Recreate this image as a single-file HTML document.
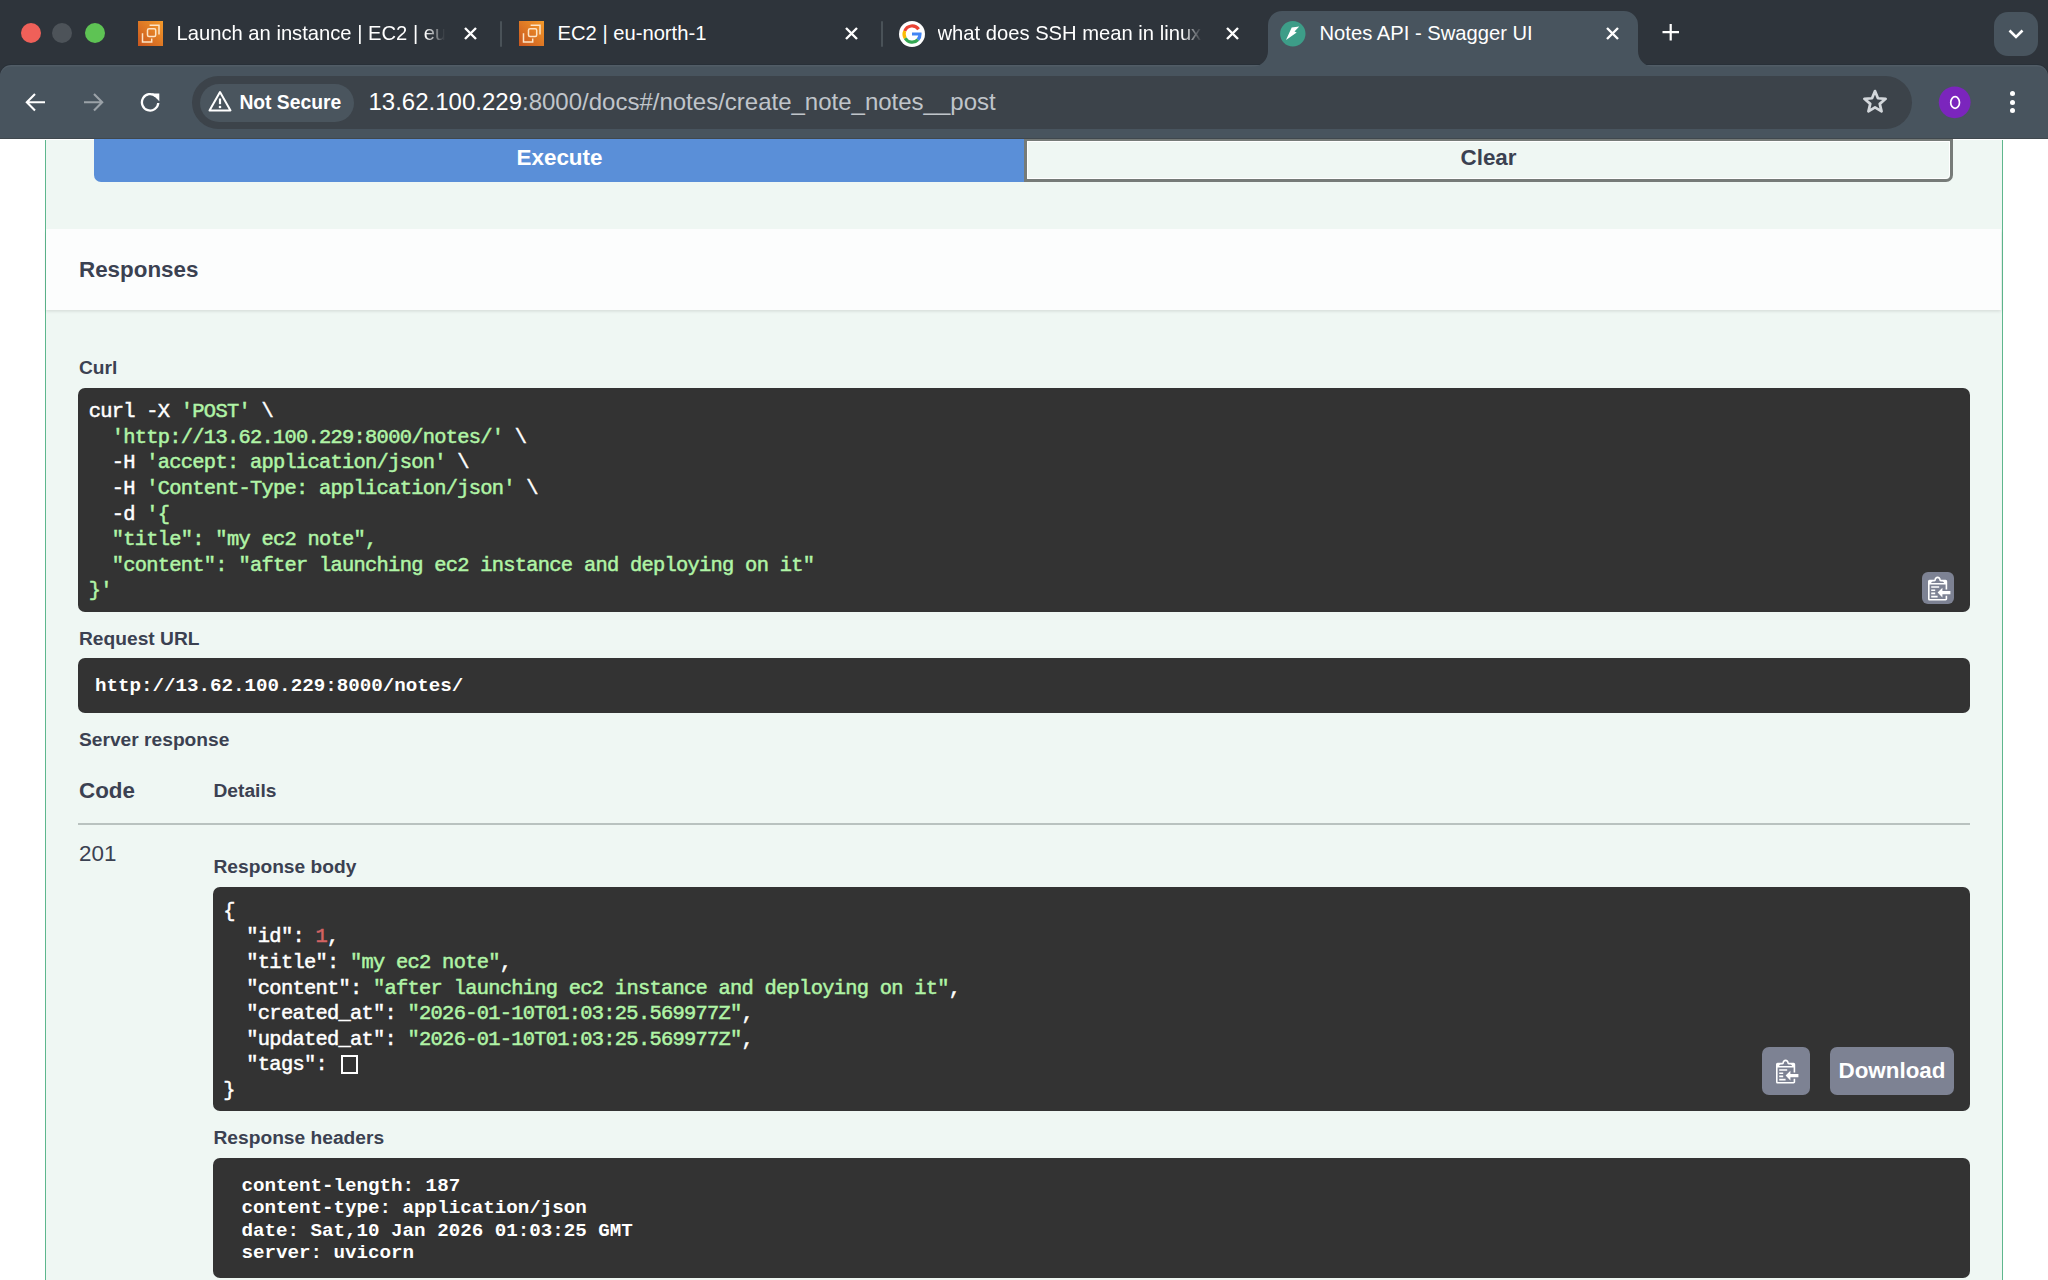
<!DOCTYPE html>
<html><head><meta charset="utf-8">
<style>
*{margin:0;padding:0;box-sizing:border-box}
html,body{width:2048px;height:1280px;overflow:hidden;background:#fff;font-family:"Liberation Sans",sans-serif}
.a{position:absolute}
#tabs{left:0;top:0;width:2048px;height:90px;background:#2e343b}
.tl{width:20px;height:20px;border-radius:50%;top:22px}
.ttl{color:#fff;font-size:20.2px;top:21px;white-space:nowrap;overflow:hidden;line-height:24px}
.x{width:14px;height:14px;top:26px}
.sep{width:2px;height:26px;top:21px;background:#4a5258;border-radius:1px}
#toolbar{left:0;top:65px;width:2048px;height:74px;background:#48545e;border-radius:11px 11px 0 0;box-shadow:0 -1px 0 #283038,inset 0 1.5px 0 rgba(255,255,255,.05)}
#omni{left:192px;top:76px;width:1720.4px;height:53.4px;background:#3c434a;border-radius:27px}
#chip{left:200px;top:84px;width:154px;height:38px;background:#4a555e;border-radius:19px}
#page{left:0;top:140px;width:2048px;height:1140px;background:#fff;overflow:hidden}
#opblock{left:44.7px;top:-20px;width:1958.4px;height:1200px;background:#eff7f3;border-left:1.7px solid #5eb78d;border-right:1.7px solid #5eb78d}
.h{color:#3b4151;font-weight:bold;white-space:nowrap}
.code{background:#333;border-radius:7px}
.mono{font-family:"Liberation Mono",monospace;white-space:pre;color:#fff;-webkit-text-stroke:0.5px currentColor}
.g{color:#b0f4a6}
</style></head><body>
<!-- PAGE -->
<div id="page" class="a">
  <div id="opblock" class="a"></div>
</div>
<!-- buttons -->
<div class="a" style="left:94px;top:130px;width:931px;height:52px;background:#5a8fd8;border-radius:0 0 0 7px"></div>
<div class="a h" style="left:94px;top:146.8px;width:931px;text-align:center;font-size:22.4px;line-height:22.4px;color:#fff">Execute</div>
<div class="a" style="left:1024px;top:138px;width:929px;height:43.8px;border:3px solid #767b78;border-radius:0 0 7px 0;background:#eff7f3"></div>
<div class="a" style="left:1027px;top:141px;width:923px;height:37.8px;border:1.3px solid #fff;border-radius:0 0 5px 0"></div>
<div class="a h" style="left:1024px;top:146.8px;width:929px;text-align:center;font-size:22.4px;line-height:22.4px">Clear</div>
<!-- responses header -->
<div class="a" style="left:46.4px;top:229px;width:1954.4px;height:81px;background:#fcfdfd;box-shadow:0 1.6px 3px rgba(0,0,0,.1),0 -0.5px 1px rgba(0,0,0,.04)"></div>
<div class="a h" style="left:79px;top:258.7px;font-size:22.4px;line-height:22.4px">Responses</div>
<div class="a h" style="left:79px;top:358.4px;font-size:19.2px;line-height:19.2px">Curl</div>
<div class="a code" style="left:78.4px;top:388.4px;width:1891.4px;height:223.4px"></div>
<div class="a mono" style="left:88.7px;top:399.3px;font-size:20.4px;letter-spacing:-0.72px;line-height:25.6px">curl -X <span class="g">'POST'</span> \
  <span class="g">'http://13.62.100.229:8000/notes/'</span> \
  -H <span class="g">'accept: application/json'</span> \
  -H <span class="g">'Content-Type: application/json'</span> \
  -d <span class="g">'{
  "title": "my ec2 note",
  "content": "after launching ec2 instance and deploying on it"
}'</span></div>
<div class="a" style="left:1922px;top:572px;width:32px;height:32px;border-radius:6px;background:#7d8293"></div>
<svg class="a" style="left:1928px;top:574.6px" width="24" height="27" viewBox="0 0 15 16.875"><path fill="#fff" d="M2 13h4v1H2v-1zm5-6H2v1h5V7zm2 3V8l-3 3 3 3v-2h5v-2H9zM4.5 9H2v1h2.5V9zM2 12h2.5v-1H2v1zm9 1h1v2c-.02.28-.11.52-.3.7-.19.18-.42.28-.7.3H1c-.55 0-1-.45-1-1V4c0-.55.45-1 1-1h3c0-1.110.89-2 2-2 1.11 0 2 .89 2 2h3c.55 0 1 .45 1 1v5h-1V6H1v9h10v-2zM2 5h8c0-.55-.45-1-1-1H8c-.55 0-1-.45-1-1s-.45-1-1-1-1 .45-1 1-.45 1-1 1H3c-.55 0-1 .45-1 1z"/></svg>
<div class="a h" style="left:79px;top:629.2px;font-size:19.2px;line-height:19.2px">Request URL</div>
<div class="a code" style="left:78.2px;top:658px;width:1891.6px;height:54.6px"></div>
<div class="a mono" style="left:94.9px;top:673.6px;font-size:19.2px;line-height:25.6px;font-weight:bold;-webkit-text-stroke:0">http://13.62.100.229:8000/notes/</div>
<div class="a h" style="left:79px;top:729.7px;font-size:19.2px;line-height:19.2px">Server response</div>
<div class="a h" style="left:79px;top:779.7px;font-size:22.4px;line-height:22.4px">Code</div>
<div class="a h" style="left:213.5px;top:781.2px;font-size:19.2px;line-height:19.2px">Details</div>
<div class="a" style="left:78px;top:823px;width:1892px;height:2px;background:#b9c2bf"></div>
<div class="a h" style="left:79px;top:843.2px;font-size:22.4px;line-height:22.4px;font-weight:normal">201</div>
<div class="a h" style="left:213.5px;top:857.4px;font-size:19.2px;line-height:19.2px">Response body</div>
<div class="a code" style="left:213px;top:887.3px;width:1756.8px;height:223.4px"></div>
<div class="a mono" style="left:223.3px;top:898.9px;font-size:20.4px;letter-spacing:-0.72px;line-height:25.6px">{
  "id": <span style="color:#d36363">1</span>,
  "title": <span class="g">"my ec2 note"</span>,
  "content": <span class="g">"after launching ec2 instance and deploying on it"</span>,
  "created_at": <span class="g">"2026-01-10T01:03:25.569977Z"</span>,
  "updated_at": <span class="g">"2026-01-10T01:03:25.569977Z"</span>,
  "tags": <span style="display:inline-block;vertical-align:top;margin-top:2.6px;margin-left:2.2px;width:17.4px;height:19.4px;border:2.7px solid #fff"></span>
}</div>
<div class="a" style="left:1762px;top:1047px;width:48px;height:48px;border-radius:7px;background:#7d8293"></div>
<svg class="a" style="left:1775.7px;top:1057.7px" width="24" height="27" viewBox="0 0 15 16.875"><path fill="#fff" d="M2 13h4v1H2v-1zm5-6H2v1h5V7zm2 3V8l-3 3 3 3v-2h5v-2H9zM4.5 9H2v1h2.5V9zM2 12h2.5v-1H2v1zm9 1h1v2c-.02.28-.11.52-.3.7-.19.18-.42.28-.7.3H1c-.55 0-1-.45-1-1V4c0-.55.45-1 1-1h3c0-1.110.89-2 2-2 1.11 0 2 .89 2 2h3c.55 0 1 .45 1 1v5h-1V6H1v9h10v-2zM2 5h8c0-.55-.45-1-1-1H8c-.55 0-1-.45-1-1s-.45-1-1-1-1 .45-1 1-.45 1-1 1H3c-.55 0-1 .45-1 1z"/></svg>
<div class="a" style="left:1830px;top:1047px;width:124px;height:48px;border-radius:7px;background:#7d8293"></div>
<div class="a h" style="left:1830px;top:1060.2px;width:124px;text-align:center;font-size:22.4px;line-height:22.4px;color:#fff">Download</div>
<div class="a h" style="left:213.5px;top:1128.2px;font-size:19.2px;line-height:19.2px">Response headers</div>
<div class="a code" style="left:213.3px;top:1158px;width:1756.5px;height:120.3px"></div>
<div class="a mono" style="left:241.4px;top:1174.9px;font-size:19.2px;line-height:22.4px;font-weight:bold;-webkit-text-stroke:0">content-length: 187
content-type: application/json
date: Sat,10 Jan 2026 01:03:25 GMT
server: uvicorn</div>
<!-- TAB STRIP -->
<div id="tabs" class="a">
  <div class="a tl" style="left:20.8px;top:22.5px;background:#ef6059"></div>
  <div class="a tl" style="left:52.4px;top:22.5px;background:#4d5359"></div>
  <div class="a tl" style="left:84.7px;top:22.5px;background:#5ec354"></div>
  <!-- tab1 -->
  <svg class="a" style="left:138px;top:21px" width="25" height="25" viewBox="0 0 25 25">
    <defs><linearGradient id="aws" x1="0" y1="1" x2="1" y2="0"><stop offset="0" stop-color="#c9561f"/><stop offset="1" stop-color="#f39a2a"/></linearGradient></defs>
    <rect width="25" height="25" fill="url(#aws)"/>
    <path d="M11.6 4.2H21V13.6" fill="none" stroke="#fce4c6" stroke-width="1.5"/>
    <rect x="9.5" y="7.8" width="8.2" height="7.8" rx="1.5" fill="none" stroke="#fce4c6" stroke-width="1.5"/>
    <path d="M4.5 12.2V21.1H13.7V17.4" fill="none" stroke="#fce4c6" stroke-width="1.5"/>
  </svg>
  <div class="a ttl" style="left:176.5px;top:20.8px;width:270px;-webkit-mask-image:linear-gradient(90deg,#000 248px,transparent 268px)">Launch an instance | EC2 | eu-north-1</div>
  <svg class="a" style="left:464px;top:27.2px" width="13" height="13" viewBox="0 0 13 13"><path d="M1 1L12 12M12 1L1 12" stroke="#fff" stroke-width="2.4"/></svg>
  <div class="a sep" style="left:499.6px"></div>
  <!-- tab2 -->
  <svg class="a" style="left:518.5px;top:21px" width="25" height="25" viewBox="0 0 25 25">
    <rect width="25" height="25" fill="url(#aws)"/>
    <path d="M11.6 4.2H21V13.6" fill="none" stroke="#fce4c6" stroke-width="1.5"/>
    <rect x="9.5" y="7.8" width="8.2" height="7.8" rx="1.5" fill="none" stroke="#fce4c6" stroke-width="1.5"/>
    <path d="M4.5 12.2V21.1H13.7V17.4" fill="none" stroke="#fce4c6" stroke-width="1.5"/>
  </svg>
  <div class="a ttl" style="left:557.5px;top:20.8px">EC2 | eu-north-1</div>
  <svg class="a" style="left:845px;top:27.2px" width="13" height="13" viewBox="0 0 13 13"><path d="M1 1L12 12M12 1L1 12" stroke="#fff" stroke-width="2.4"/></svg>
  <div class="a sep" style="left:880.6px"></div>
  <!-- tab3 -->
  <svg class="a" style="left:899px;top:20.7px" width="26" height="26" viewBox="0 0 26 26">
    <circle cx="13" cy="13" r="13" fill="#fff"/>
    <path d="M19.6 8.2A8 8 0 0 0 5.7 10" fill="none" stroke="#ea4335" stroke-width="3.2"/>
    <path d="M5.7 10A8 8 0 0 0 6.2 17.2" fill="none" stroke="#fbbc05" stroke-width="3.2"/>
    <path d="M6.2 17.2A8 8 0 0 0 19 18.6" fill="none" stroke="#34a853" stroke-width="3.2"/>
    <path d="M19 18.6A8 8 0 0 0 21 13H13" fill="none" stroke="#4285f4" stroke-width="3.2"/>
  </svg>
  <div class="a ttl" style="left:937.5px;top:20.8px;width:264px;-webkit-mask-image:linear-gradient(90deg,#000 244px,transparent 264px)">what does SSH mean in linux</div>
  <svg class="a" style="left:1226px;top:27.2px" width="13" height="13" viewBox="0 0 13 13"><path d="M1 1L12 12M12 1L1 12" stroke="#fff" stroke-width="2.4"/></svg>
  <!-- active tab -->
  
  <svg class="a" style="left:1661.5px;top:23.8px" width="18" height="17" viewBox="0 0 18 17"><path d="M8.7 0V16.4M0.5 8.2H17" stroke="#fff" stroke-width="2.2"/></svg>
  <div class="a" style="left:1994px;top:12px;width:44px;height:44px;border-radius:14px;background:#48545e"></div>
  <svg class="a" style="left:2008px;top:28px" width="16" height="12" viewBox="0 0 16 12"><path d="M1.5 2.5L8 9L14.5 2.5" fill="none" stroke="#fff" stroke-width="2.6"/></svg>
</div>
<!-- TOOLBAR -->
<div id="toolbar" class="a"></div>
<svg class="a" id="acttab" style="left:1252px;top:11px" width="402" height="56" viewBox="0 0 402 56">
    <path d="M0 56A16 16 0 0 0 16 40V14A14 14 0 0 1 30 0H372A14 14 0 0 1 386 14V40A16 16 0 0 0 402 56Z" fill="#48545e"/>
  </svg>
  <svg class="a" style="left:1280px;top:20.8px" width="26" height="26" viewBox="0 0 26 26">
    <circle cx="12.8" cy="12.8" r="12.7" fill="#3d9d88"/>
    <path d="M11.7 6.5L19.2 5.4L14.5 10.4L16.7 11.5L6 19Z" fill="#fff"/>
  </svg>
  <div class="a ttl" style="left:1319.5px;top:20.8px">Notes API - Swagger UI</div>
  <svg class="a" style="left:1606.3px;top:27.2px" width="13" height="13" viewBox="0 0 13 13"><path d="M1 1L12 12M12 1L1 12" stroke="#fff" stroke-width="2.4"/></svg>
<svg class="a" style="left:25px;top:92px" width="21" height="21" viewBox="0 0 21 21"><path d="M20 10.2H2.5M10 2L1.8 10.2L10 18.6" fill="none" stroke="#fff" stroke-width="2.1"/></svg>
<svg class="a" style="left:82.5px;top:92px" width="21" height="21" viewBox="0 0 21 21"><path d="M1 10.2H18.5M11 2L19.2 10.2L11 18.6" fill="none" stroke="#9ba2a8" stroke-width="2.1"/></svg>
<svg class="a" style="left:140px;top:92px" width="21" height="21" viewBox="0 0 21 21"><path d="M18.3 11A8.2 8.2 0 1 1 15.6 4.2" fill="none" stroke="#fff" stroke-width="2.3"/><path d="M11.5 1.5H19.3V9.3Z" fill="#fff"/></svg>
<div class="a" style="left:0;top:138px;width:2048px;height:1px;background:#40484e"></div>
<div id="omni" class="a"></div>
<div id="chip" class="a"></div>
<svg class="a" style="left:207.5px;top:90.3px" width="24" height="22" viewBox="0 0 24 22"><path d="M12 2L22.5 20.5H1.5Z" fill="none" stroke="#fff" stroke-width="2" stroke-linejoin="round"/><path d="M12 8.5V14.2" stroke="#fff" stroke-width="2.2"/><circle cx="12" cy="17" r="1.3" fill="#fff"/></svg>
<div class="a" style="left:239.4px;top:92.7px;font-size:19.3px;line-height:19.3px;font-weight:bold;color:#fff;white-space:nowrap">Not Secure</div>
<div class="a" style="left:368.5px;top:90.2px;font-size:24px;line-height:24px;color:#c0c5ca;white-space:nowrap"><span style="color:#fff">13.62.100.229</span>:8000/docs#/notes/create_note_notes__post</div>
<svg class="a" style="left:1862px;top:88.5px" width="26" height="26" viewBox="0 0 26 26"><path d="M13.00 2.10L15.94 9.25L23.65 9.84L17.76 14.85L19.58 22.36L13.00 18.30L6.42 22.36L8.24 14.85L2.35 9.84L10.06 9.25Z" fill="none" stroke="#d3d7db" stroke-width="2.7" stroke-linejoin="round"/></svg>
<svg class="a" style="left:1938px;top:86px" width="34" height="34" viewBox="0 0 34 34"><circle cx="16.7" cy="16.3" r="15.9" fill="#7b25bd"/><ellipse cx="17.1" cy="16.5" rx="4.4" ry="5.8" fill="none" stroke="#fff" stroke-width="1.7"/></svg>
<div class="a" style="left:2010.2px;top:90.8px;width:5px;height:5px;border-radius:50%;background:#fff"></div>
<div class="a" style="left:2010.2px;top:99.6px;width:5px;height:5px;border-radius:50%;background:#fff"></div>
<div class="a" style="left:2010.2px;top:108.4px;width:5px;height:5px;border-radius:50%;background:#fff"></div>
</body></html>
